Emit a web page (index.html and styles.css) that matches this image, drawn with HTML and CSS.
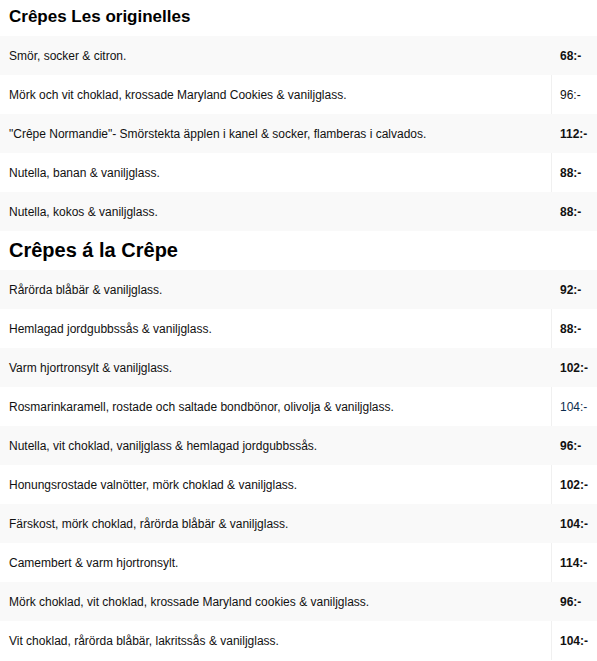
FILE: index.html
```html
<!DOCTYPE html>
<html lang="sv">
<head>
<meta charset="utf-8">
<link rel="stylesheet" href="styles.css">
</head>
<body>
<section class="menu">
  <h3 class="title small">Crêpes Les originelles</h3>
  <div class="list">
    <div class="row"><span class="name">Smör, socker &amp; citron.</span><span class="price bold">68:-</span></div>
    <div class="row"><span class="name">Mörk och vit choklad, krossade Maryland Cookies &amp; vaniljglass.</span><span class="price">96:-</span></div>
    <div class="row"><span class="name">"Crêpe Normandie"- Smörstekta äpplen i kanel &amp; socker, flamberas i calvados.</span><span class="price bold">112:-</span></div>
    <div class="row"><span class="name">Nutella, banan &amp; vaniljglass.</span><span class="price bold">88:-</span></div>
    <div class="row"><span class="name">Nutella, kokos &amp; vaniljglass.</span><span class="price bold">88:-</span></div>
  </div>
  <h2 class="title large">Crêpes á la Crêpe</h2>
  <div class="list">
    <div class="row"><span class="name">Rårörda blåbär &amp; vaniljglass.</span><span class="price bold">92:-</span></div>
    <div class="row"><span class="name">Hemlagad jordgubbssås &amp; vaniljglass.</span><span class="price bold">88:-</span></div>
    <div class="row"><span class="name">Varm hjortronsylt &amp; vaniljglass.</span><span class="price bold">102:-</span></div>
    <div class="row"><span class="name">Rosmarinkaramell, rostade och saltade bondbönor, olivolja &amp; vaniljglass.</span><span class="price link">104:-</span></div>
    <div class="row"><span class="name">Nutella, vit choklad, vaniljglass &amp; hemlagad jordgubbssås.</span><span class="price bold">96:-</span></div>
    <div class="row"><span class="name">Honungsrostade valnötter, mörk choklad &amp; vaniljglass.</span><span class="price bold">102:-</span></div>
    <div class="row"><span class="name">Färskost, mörk choklad, rårörda blåbär &amp; vaniljglass.</span><span class="price bold">104:-</span></div>
    <div class="row"><span class="name">Camembert &amp; varm hjortronsylt.</span><span class="price bold">114:-</span></div>
    <div class="row"><span class="name">Mörk choklad, vit choklad, krossade Maryland cookies &amp; vaniljglass.</span><span class="price bold">96:-</span></div>
    <div class="row"><span class="name">Vit choklad, rårörda blåbär, lakritssås &amp; vaniljglass.</span><span class="price bold">104:-</span></div>
  </div>
</section>
</body>
</html>
```
FILE: styles.css
```css
html, body {
  margin: 0;
  padding: 0;
  background: #fff;
}
body {
  font-family: "Liberation Sans", Arial, sans-serif;
  color: #111;
}
.menu {
  width: 597px;
}
.title {
  margin: 0;
  font-weight: bold;
  color: #000;
  padding-left: 9px;
  display: flex;
  align-items: center;
}
.title.small {
  font-size: 17px;
  height: 36px;
  padding-bottom: 3px;
  box-sizing: border-box;
}
.title.large {
  font-size: 20px;
  height: 39px;
}
.list {
  display: flex;
  flex-direction: column;
}
.row {
  display: grid;
  grid-template-columns: 551px 46px;
  height: 39px;
  font-size: 12px;
  background: #fff;
}
.row:nth-child(odd) {
  background: #f9f9f9;
}
.name, .price {
  display: flex;
  align-items: center;
  padding-left: 9px;
}
.price {
  padding-left: 8px;
  border-left: 1px solid transparent;
}
.row:nth-child(even) .price {
  border-left-color: #f0f0f0;
}
.bold {
  font-weight: bold;
}
.link {
  color: #0b2c4d;
}
```
